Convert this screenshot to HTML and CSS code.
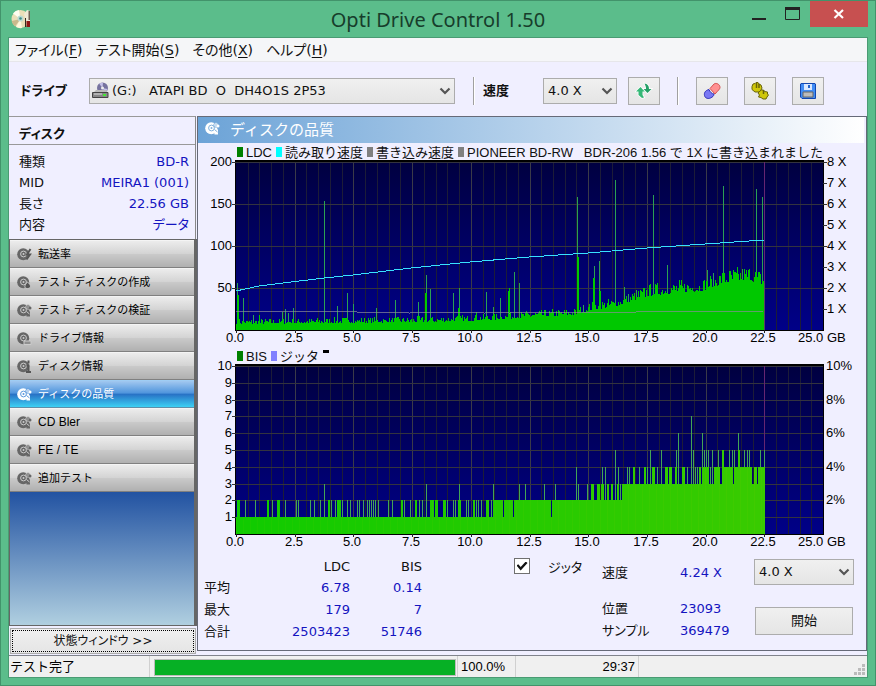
FILE: index.html
```html
<!DOCTYPE html>
<html lang="ja">
<head>
<meta charset="utf-8">
<title>Opti Drive Control 1.50</title>
<link rel="stylesheet" href="styles.css">
</head>
<body>
<svg class="defs" aria-hidden="true">
  <symbol id="chevron" viewBox="0 0 12 8"><path d="M1.500 1.500 6 6l4.500-4.500" fill="none" stroke="#555" stroke-width="2.200"/></symbol>
  <symbol id="disc" viewBox="0 0 15 14">
    <circle cx="6.200" cy="7.300" r="6" fill="currentColor"/>
    <circle cx="6.500" cy="7" r="2.900" fill="none" class="ring"/>
    <circle cx="6.500" cy="7" r="1" class="hole"/>
  </symbol>
  <symbol id="magnifier" viewBox="0 0 15 14">
    <path d="M9 10.500 13 8v5.500H9.500Z" fill="currentColor"/>
    <path d="M9.500 8.500 12.500 11" class="light"/>
    <circle cx="11" cy="4" r="2.200" fill="currentColor" class="ring"/><circle cx="13" cy="5" r="1.500" fill="currentColor"/>
    <circle cx="11" cy="4" r=".8" class="hole"/>
  </symbol>
</svg>
<div class="window">
  <header class="titlebar">
    <svg class="app-icon" viewBox="0 0 20 20">
      <circle cx="9.500" cy="10" r="9" fill="#eadfb8"/>
      <path d="M9.500 10 2 4.500A9 9 0 0 1 8 1Z" fill="#fffdf0"/><path d="M9.500 10 4 17.500A9 9 0 0 1 .7 12Z" fill="#c9b98c"/>
      <path d="M9.500 10 11 19A9 9 0 0 1 5 18Z" fill="#fff8dc"/>
      <path d="M13 5 16 1l3 1v10h-4Z" fill="#efe9d6"/><path d="M17.500 2H19v9h-1.500Z" fill="#6d6256"/>
      <circle cx="9.500" cy="9.500" r="3" fill="#bcd9d2"/><circle cx="9.500" cy="9.500" r="1.300" fill="#3c8f86"/>
      <path d="M14 9h1v9h-1Z" fill="#30291f"/><path d="M15.500 12H19v6h-3.500Z" fill="#8e1515"/>
    </svg>
    <h1>Opti Drive Control 1.50</h1>
    <div class="controls">
      <button aria-label="最小化"><svg width="14" height="14"><path d="M0 12h14" stroke="#222" stroke-width="2"/></svg></button>
      <button aria-label="最大化"><svg width="16" height="14"><path d="M.5 1V12.500H14.500V1" fill="none" stroke="#222"/><path d="M0 1.500H15" stroke="#222" stroke-width="3"/></svg></button>
      <button class="close" aria-label="閉じる"><svg width="12" height="10"><path d="M1.500 1 10 9M10 1 1.500 9" stroke="#fff" stroke-width="2.200"/></svg></button>
    </div>
  </header>
  <div class="client">
    <nav class="menu">
      <a href="#">ファイル(<u>F</u>)</a><a href="#">テスト開始(<u>S</u>)</a><a href="#">その他(<u>X</u>)</a><a href="#">ヘルプ(<u>H</u>)</a>
    </nav>
    <div class="toolbar">
      <label class="drive-label" for="drive">ドライブ</label>
      <div class="combo drive">
        <svg class="drive-icon" viewBox="0 0 17 17">
          <circle cx="10.500" cy="6" r="5.500" fill="#76739f"/><path d="M10.500 6 7 1.500 11 .5Z M10.500 6l5 1-2 3.500Z" fill="#c3bfe8"/><circle cx="10.500" cy="6" r="1.500" fill="#eee"/>
          <path d="M1 11 4 8h10l2 3Z" fill="#bbb"/><path d="M.5 10.500h15.500v5H.5Z" fill="#888" stroke="#444"/><path d="M2 12h8" stroke="#ddd"/><path d="M11 12h3v2h-3Z" fill="#42e832"/>
        </svg>
        <select id="drive"><option>(G:)&nbsp;&nbsp; ATAPI BD&nbsp; O&nbsp; DH4O1S 2P53</option></select>
        <svg class="chev"><use href="#chevron"/></svg>
      </div>
      <span class="sep"></span>
      <label class="speed-label" for="speed">速度</label>
      <div class="combo speed"><select id="speed"><option>4.0 X</option></select><svg class="chev"><use href="#chevron"/></svg></div>
      <button class="tool" aria-label="更新"><svg viewBox="0 0 18 18">
        <g stroke="#fff" stroke-width="1.500" paint-order="stroke">
        <path d="M1 9.500 5.500 5 10 9.500H7.500V13l1.500 2.500-2 .5-3.500-3V9.500Z" fill="#35b877"/>
        <path d="M9.500 1.500c3 .5 4.500 2 4.500 5.500h2.500L12.500 11 8.500 7H11c0-2-.5-3.500-1.500-5.500Z" fill="#249f66"/></g></svg></button>
      <span class="sep sep2"></span>
      <button class="tool" aria-label="消去"><svg viewBox="0 0 18 18">
        <path d="M7 6.500 11 2c2-1.500 6 0 6 3.500 0 1.500-2 3-5 6.500Z" fill="#ff9090" stroke="#d65050"/><path d="M6 7.500C2 8.500 1 11 1.500 13.500c.5 3 4 3.500 6 2.500 2-1 3.500-2 3.500-4C9 12 7 10 6 7.500Z" fill="#7a78f4" stroke="#3030b8"/></svg></button>
      <button class="tool" aria-label="設定"><svg viewBox="0 0 18 18">
        <g fill="#cfc70a" stroke="#69640a"><path d="M2 2 4 1.500 5 .5h2l1 1.500 2 1 1 3-1 2-2 2H4L1 7.500v-3Z"/><path d="M9 9 10.500 8h2l1 1.500 3 .5v2l1 1-1.500 2-1 2h-3l-2-1.500L7.500 15l1-2L7 11Z"/></g><path d="M5.500 1v5M8 2v4M12.500 8v4" stroke="#69640a" stroke-width="1.500"/></svg></button>
      <button class="tool" aria-label="保存"><svg viewBox="0 0 18 18">
        <path d="M2 1.500h14l.5.5v14.500H3L1.500 15V2Z" fill="#418df5" stroke="#1246b0"/><path d="M5 2h8v6H5Z" fill="#d9e8ff"/><path d="M9 3h2v3H9Z" fill="#2463c9"/><path d="M4 10h10v5H4Z" fill="#bbb" stroke="#666"/></svg></button>
    </div>
    <div class="main">
      <aside class="side">
        <section class="disc-info">
          <h2>ディスク</h2>
          <dl>
            <div><dt>種類</dt><dd>BD-R</dd></div>
            <div><dt>MID</dt><dd>MEIRA1 (001)</dd></div>
            <div><dt>長さ</dt><dd>22.56 GB</dd></div>
            <div><dt>内容</dt><dd>データ</dd></div>
          </dl>
        </section>
        <nav class="pages">
          <a href="#"><svg><use href="#disc"/><path d="M13.500 2 10 7.500h3L9.500 12.500" class="mark"/></svg>転送率</a>
          <a href="#"><svg><use href="#disc"/><path d="M10.500 7c4 3 4 6.500 0 6.500s-3-3.500 0-6.500Z" class="blob"/></svg>テスト ディスクの作成</a>
          <a href="#"><svg><use href="#disc"/><use href="#magnifier"/></svg>テスト ディスクの検証</a>
          <a href="#"><svg><use href="#disc"/><path d="M7 10h7v3.500H7Z" class="blob gray-blob"/></svg>ドライブ情報</a>
          <a href="#"><svg><use href="#disc"/><path d="M11.500 1.500v3M9.500 6.500h2v7M9 13h5" class="mark"/></svg>ディスク情報</a>
          <a href="#" class="active"><svg><use href="#disc"/><use href="#magnifier"/></svg>ディスクの品質</a>
          <a href="#" lang="en"><svg><use href="#disc"/><use href="#magnifier"/></svg>CD Bler</a>
          <a href="#" lang="en"><svg><use href="#disc"/><use href="#magnifier"/></svg>FE / TE</a>
          <a href="#"><svg><use href="#disc"/><use href="#magnifier"/></svg>追加テスト</a>
        </nav>
        <div class="state"><button>状態ウィンドウ &gt;&gt;</button></div>
      </aside>
      <main class="panel">
        <h2><svg><use href="#disc"/><use href="#magnifier"/></svg>ディスクの品質</h2>
        <figure>
          <figcaption><span class="green">LDC</span><span class="cyan">読み取り速度</span><span class="gray">書き込み速度</span><span class="gray">PIONEER BD-RW &nbsp; BDR-206 1.56 で 1X に書き込まれました</span></figcaption>
          <svg id="ldc" class="chart" viewBox="0 0 668 186"></svg>
        </figure>
        <figure>
          <figcaption><span class="green">BIS</span><span class="violet">ジッタ</span><i class="dash"></i></figcaption>
          <svg id="bis" class="chart" viewBox="0 0 668 186"></svg>
        </figure>
        <div class="results">
          <table>
            <thead><tr><td></td><th scope="col">LDC</th><th scope="col">BIS</th></tr></thead>
            <tbody>
              <tr><th scope="row">平均</th><td>6.78</td><td>0.14</td></tr>
              <tr><th scope="row">最大</th><td>179</td><td>7</td></tr>
              <tr><th scope="row">合計</th><td>2503423</td><td>51746</td></tr>
            </tbody>
          </table>
          <div class="jitter"><input type="checkbox" id="jitter" checked><label for="jitter">ジッタ</label></div>
          <dl>
            <div class="first"><dt>速度</dt><dd>4.24 X</dd></div>
            <div><dt>位置</dt><dd>23093</dd></div>
            <div><dt>サンプル</dt><dd>369479</dd></div>
          </dl>
          <div class="run">
            <div class="combo"><select aria-label="速度"><option>4.0 X</option></select><svg class="chev"><use href="#chevron"/></svg></div>
            <button>開始</button>
          </div>
        </div>
      </main>
    </div>
    <footer class="status">
      <span class="message">テスト完了</span>
      <span class="bar"><span class="fill"></span></span>
      <span class="percent">100.0%</span>
      <span class="time">29:37</span>
      <svg class="grip" viewBox="0 0 11 11"><path d="M8 0h3v3H8ZM4 4h3v3H4ZM8 4h3v3H8ZM0 8h3v3H0ZM4 8h3v3H4ZM8 8h3v3H8Z" fill="#bbb"/></svg>
    </footer>
  </div>
</div>
<script src="charts.js"></script>
</body>
</html>
```
FILE: styles.css
```css
* { box-sizing: border-box; }
body {
  margin: 0;
  font: 13px/20px "DejaVu Sans", "Noto Sans CJK JP", sans-serif;
  font-feature-settings: "palt";
  color: #111;
}
h1, h2, dl, dd, figure { margin: 0; font-weight: normal; }
a { color: inherit; text-decoration: none; }
button, select, input { font: inherit; color: inherit; margin: 0; }
.defs { position: absolute; width: 0; height: 0; }

.window {
  display: flex;
  flex-direction: column;
  min-height: 100vh;
  padding: 0 7px 7px;
  border: 1px solid #42936b;
  background: #5bbd8b;
}
.titlebar {
  display: grid;
  grid-template-columns: 1fr auto 1fr;
  height: 36px;
}
.app-icon { width: 20px; height: 20px; margin: 8px 0 0 3px; }
.titlebar h1 { font: 20px/38px "Noto Sans", sans-serif; color: #173d2b; }
.controls { display: flex; justify-content: flex-end; }
.controls button {
  display: flex;
  align-items: center;
  justify-content: center;
  width: 34px;
  height: 26px;
  padding: 0;
  border: 0;
  background: none;
}
.controls .close { width: 58px; background: #c75050; }

.client {
  display: flex;
  flex-direction: column;
  flex: 1;
  border: 1px solid #4a9b73;
  background: #f0efff;
}
.menu {
  display: flex;
  gap: 13px;
  height: 24px;
  padding-left: 6px;
  border-bottom: 1px solid #e6e6ea;
  background: #f5f6f8;
  font-size: 14px;
  line-height: 24px;
}
.menu u { text-underline-offset: 2px; }

.toolbar { display: flex; align-items: center; height: 54px; padding: 4px 43px 0 11px; }
.toolbar label { font-weight: bold; }
.drive-label { width: 69px; }
.combo { position: relative; }
.combo select {
  width: 100%;
  height: 26px;
  padding: 0 24px 0 4px;
  border: 1px solid #acacac;
  border-radius: 0;
  background: linear-gradient(#f0f0f0, #e5e5e5);
  appearance: none;
}
.combo .chev { position: absolute; top: 9px; right: 4px; width: 12px; height: 8px; pointer-events: none; }
.drive { flex: 1; }
.drive select { padding-left: 22px; }
.drive-icon { position: absolute; top: 4px; left: 3px; width: 17px; height: 17px; }
.sep { width: 2px; height: 28px; margin-left: 18px; border-left: 1px solid #a0a0a0; border-right: 1px solid #fff; }
.speed-label { width: 60px; margin-left: 8px; }
.speed { width: 74px; }
.tool {
  display: flex;
  align-items: center;
  justify-content: center;
  width: 32px;
  height: 28px;
  padding: 0;
  margin-left: 16px;
  border: 1px solid #acacac;
  background: linear-gradient(#f0f0f0, #e5e5e5);
}
.tool svg { width: 18px; height: 18px; }
.speed + .tool { margin-left: 11px; margin-right: -1px; }
.sep2 { margin-right: 1px; }

.main { display: grid; grid-template-columns: 188px 1fr; flex: 1; }
.side { display: flex; flex-direction: column; }
.disc-info { width: 187px; height: 123px; border-top: 1px solid #999; border-right: 1px solid #888; }
.disc-info h2 { height: 28px; padding-left: 10px; border-bottom: 1px solid #999; font-size: 13px; font-weight: bold; line-height: 34px; }
.disc-info dl { padding: 6px 6px 0 10px; }
.disc-info dl div { display: flex; justify-content: space-between; height: 21px; line-height: 21px; }
dd, tbody td { color: #1414c0; }

.pages {
  flex: 1;
  border: 1px solid #666;
  border-right-width: 3px;
  background: linear-gradient(#1c4c9c 45%, #2051a1 65%, #b0cfe0);
}
.pages a {
  display: flex;
  align-items: center;
  height: 28px;
  padding-left: 7px;
  border-bottom: 1px solid #808080;
  border-top: 1px solid #f4f4f4;
  background: linear-gradient(#ececec, #d4d4d4 48%, #cacaca 50%, #b0b0b0);
  color: #000;
  font: 11px/26px "Liberation Sans", "Noto Sans CJK JP", sans-serif;
}
.pages a:lang(en) { font-size: 12px; }
.pages svg, .panel h2 svg { width: 15px; height: 14px; margin-right: 6px; color: #666; overflow: visible; }
.pages svg { --light: #cacaca; }
.ring { stroke: var(--light); stroke-width: 1; }
.hole { fill: var(--light); }
.light { stroke: var(--light); }
.mark { fill: none; stroke: #555; stroke-width: 2; }
.blob { fill: #555; stroke: #ccc; }
.gray-blob { fill: #909090; }
.pages .active { border-top-color: #9fcdf4; border-bottom-color: #5f8fa8; background: linear-gradient(#a2c8f0, #4e94dc 47%, #2870c4 50%, #3cd0f4); color: #fff; }
.pages .active svg { --light: #5c9ade; color: #fff; }
.state { width: 187px; padding: 2px 0 1px 1px; }
.state button {
  display: block;
  width: 100%;
  height: 26px;
  padding: 0;
  border: 1px solid #acacac;
  outline: 1px dotted #000;
  outline-offset: -3px;
  background: linear-gradient(#f0f0f0, #e5e5e5);
  font-size: 12px;
}

.panel {
  display: flex;
  flex-direction: column;
  margin-bottom: 4px;
  border: 1px solid #666a78;
}
.panel h2 {
  display: flex;
  height: 26px;
  margin-right: 2px;
  padding-left: 7px;
  background: linear-gradient(90deg, #6ca3d7, #fff);
  color: #fff;
  font: 15px/26px "Liberation Sans", "Noto Sans CJK JP", sans-serif;
}
.panel h2 svg { --light: #7fb0dc; margin: 4px 10px 0 0; color: #fff; }
figcaption {
  display: flex;
  gap: 4px;
  height: 18px;
  padding-left: 39px;
  font: 13px/20px "Liberation Sans", "Noto Sans CJK JP", sans-serif;
  white-space: nowrap;
}
figcaption span::before { content: ""; display: inline-block; width: 6px; height: 10px; margin-right: 3px; background: var(--key); }
.green { --key: #008000; }
.cyan { --key: #00ffff; }
.gray { --key: #808080; }
.violet { --key: #8080ff; }
.dash { width: 6px; height: 3px; margin-top: 3px; background: #000; }
.chart { display: block; width: 100%; overflow: visible; font: 13px "Liberation Sans", sans-serif; }

.results { display: flex; padding: 5px 12px 0 6px; }
table { border-collapse: collapse; width: 218px; height: 87px; table-layout: fixed; }
td, th { height: 21px; padding: 0; font-weight: normal; text-align: right; }
tr > :first-child { width: 66px; text-align: left; }
tr > :last-child { width: 72px; }
.jitter { display: flex; gap: 18px; margin-left: 92px; width: 88px; height: 21px; padding-top: 2px; }
.jitter input {
  appearance: none;
  width: 16px;
  height: 16px;
  border: 1px solid #707070;
  background: #fff;
  display: grid;
  place-items: center;
}
.jitter input:checked::before { content: ""; width: 11px; height: 9px; background: #111; clip-path: polygon(0 45%, 16% 30%, 38% 60%, 84% 0, 100% 18%, 38% 100%); }
.results dl { width: 152px; padding-top: 7px; }
.results dl div { display: flex; height: 22px; }
.results dl .first { height: 36px; }
.results dt { width: 78px; }
.run { width: 100px; margin-left: auto; padding-top: 3px; }
.run button { display: block; width: 98px; height: 28px; margin: 22px 0 0 1px; padding: 0; border: 1px solid #acacac; background: linear-gradient(#f0f0f0, #e5e5e5); }

.status {
  display: flex;
  height: 22px;
  border-top: 1px solid #80838c;
  background: #f0f0f0;
  color: #000;
  font: 13px/22px "Liberation Sans", "Noto Sans CJK JP", sans-serif;
}
.status .message { width: 141px; padding-left: 1px; border-right: 1px solid #d0d0d0; }
.bar { width: 302px; height: 17px; margin: 3px 1px 0 4px; border: 1px solid #bcbcbc; }
.fill { display: block; height: 100%; background: #06b025; }
.percent { width: 59px; padding-left: 3px; border: solid #d0d0d0; border-width: 0 1px; }
.time { width: 123px; padding-right: 3px; border-right: 1px solid #d0d0d0; text-align: right; }
.grip { width: 11px; height: 11px; margin: 8px 2px 0 auto; }
```
FILE: charts.js
```js
const LEFT = 38, TOP = 0, WIDTH = 587, HEIGHT = 168, BOTTOM = 169;
const NS = "http://www.w3.org/2000/svg";

function add(svg, name, attrs, text) {
  const el = document.createElementNS(NS, name);
  for (const key in attrs) el.setAttribute(key, attrs[key]);
  if (text) el.textContent = text;
  svg.append(el);
}

function frame(svg, id, rows) {
  add(svg, "defs", {});
  svg.lastChild.innerHTML = `<linearGradient id="${id}" x2="0" y2="1"><stop stop-color="#000040"/><stop offset="1" stop-color="#000088"/></linearGradient>`;
  add(svg, "rect", { x: LEFT - 1, y: TOP - 1, width: WIDTH + 2, height: HEIGHT + 3, fill: "#000" });
  add(svg, "rect", { x: LEFT, y: TOP + 1, width: WIDTH, height: HEIGHT, fill: `url(#${id})` });
  for (let i = 1; i < 50; i++) {
    add(svg, "rect", { x: Math.round(LEFT + i * WIDTH / 50), y: 1, width: 1, height: HEIGHT, fill: i % 5 ? "#1c1c38" : "#3a3a48" });
  }
  for (let i = 0; i < rows; i++) {
    add(svg, "rect", { x: LEFT, y: Math.round(1 + i * HEIGHT / rows), width: WIDTH, height: 1, fill: "#33333f" });
  }
  for (let i = 0; i < 10; i++) {
    add(svg, "rect", { x: Math.round(LEFT + i * WIDTH / 10), y: BOTTOM, width: 1, height: 3, fill: "#222" });
    add(svg, "text", { x: Math.round(LEFT + i * WIDTH / 10) - 1, y: 181, "text-anchor": "middle" }, (i * 2.5).toFixed(1));
  }
  add(svg, "text", { x: 600, y: 181 }, "25.0 GB");
}

function bars(svg, heights, colour, thin) {
  heights.forEach((h, x) => {
    const side = Math.max(heights[x - 1] || 0, heights[x + 1] || 0);
    add(svg, "rect", { x: LEFT + x, y: BOTTOM - h, width: 1, height: h, fill: colour(x) });
    if (h > side + 6) add(svg, "rect", { x: LEFT + x, y: BOTTOM - h, width: 1, height: h - side, fill: thin });
  });
}

const ldc = document.getElementById("ldc");
ldc.setAttribute("shape-rendering", "crispEdges");
frame(ldc, "ldc-back", 4);

const base = [[0, 6], [100, 7], [200, 8], [255, 10], [300, 13], [340, 15], [351, 19], [382, 24], [412, 34], [439, 37], [466, 39], [486, 46], [513, 50], [528, 44]];
const peaks = { 1: 47, 2: 35, 7: 32, 17: 15, 23: 15, 46: 18, 49: 21, 52: 17, 57: 22, 88: 129, 101: 24, 111: 37, 117: 26, 140: 22, 159: 30, 182: 28, 189: 37, 190: 55, 194: 41, 217: 37, 222: 22, 223: 42, 240: 18, 250: 38, 257: 23, 264: 32, 272: 39, 273: 42, 278: 58, 283: 47, 341: 133, 342: 73, 357: 52, 358: 64, 363: 69, 364: 39, 379: 150, 388: 43, 417: 135, 431: 65, 471: 60, 487: 144, 520: 141, 526: 133 };
let seed = 7;
const noise = () => (seed = (seed * 16807) % 2147483647) / 2147483647;
const errors = [];
for (let x = 0, k = 0; x < 529; x++) {
  while (k < base.length - 2 && x >= base[k + 1][0]) k++;
  const [x0, y0] = base[k], [x1, y1] = base[k + 1];
  const level = y0 + (y1 - y0) * (x - x0) / (x1 - x0);
  const spread = 4 + level / 4;
  errors.push(peaks[x] || Math.round(level + noise() ** 2 * spread));
}
bars(ldc, errors, () => "#00c800", "#2ba052");
const write = [];
for (let x = 0; x < 528; x++) write.push(`${LEFT + x},${150 + (noise() > 0.9 ? 1 : 0) + (x > 120 && x < 400 ? 1 : 0)}`);
add(ldc, "polyline", { points: write.join(" "), fill: "none", stroke: "#8a8a9a", opacity: 0.7 });
add(ldc, "polyline", { points: "38,130 61,125 85,122 126,117 155,114 213,107 272,101 331,96 390,92 449,87 507,83 566,79", fill: "none", stroke: "#38e0ff" });
add(ldc, "rect", { x: 566, y: 1, width: 1, height: 168, fill: "#70207c", opacity: 0.8 });
for (let i = 1; i <= 4; i++) {
  add(ldc, "text", { x: 34, y: 173 - i * 42, "text-anchor": "end" }, String(i * 50));
  add(ldc, "rect", { x: 34, y: 169 - i * 42, width: 4, height: 1, fill: "#333" });
}
for (let i = 1; i <= 8; i++) {
  add(ldc, "rect", { x: 625, y: 169 - i * 21, width: 4, height: 1, fill: "#333" });
  add(ldc, "text", { x: 629, y: 173 - i * 21 }, i + " X");
}

const bis = document.getElementById("bis");
bis.setAttribute("shape-rendering", "crispEdges");
frame(bis, "bis-back", 10);
const counts = new Array(529).fill(1);
const spans = {
  2: "1-3 9 19 31-32 36 41-43 49 60 62 74 78 84 92-93 95 99 101-104 106 111 114 121 123 127 131 133 135 137 139 142 152 156 165-166 168 174 179-180 183 186 194-197 199-201 207-209 211 217 219 222-224 230 232 237-238 240 242 245 250-252 255 258-266 268-276 278-314 316-528",
  3: "88 190 223 257 283 289 308 319 342 351 355-357 361-363 365-367 371-372 375-376 381 384 386 387-528",
  4: "340 366 369 382 391 393 397-398 403 408-409 411 416-418 421 429-431 433-435 439-440 446-448 451 457 459 461 463-464 466-472 474 478-483 486-496 498-515 518-520 522-528",
  5: "379 414 425 440 457 468 470 472 476 482 486-487 493 496 498 503 508 511 513 524 528",
  6: "442 466 502",
  7: "455"
};
for (const value in spans) {
  for (const span of spans[value].split(" ")) {
    const [from, to = from] = span.split("-").map(Number);
    for (let x = from; x <= to; x++) counts[x] = Number(value);
  }
}
bars(bis, counts.map(n => Math.round(n * 16.8)), x => `rgb(${16 + Math.round(x / 13) + (x % 7 === 0 ? 8 : 0)},203,0)`, "#43a455");
add(bis, "rect", { x: 566, y: 1, width: 1, height: 84, fill: "#70207c", opacity: 0.8 });
for (let i = 1; i <= 10; i++) {
  const y = Math.round(169 - i * 16.8);
  add(bis, "text", { x: 34, y: y + 4, "text-anchor": "end" }, String(i));
  add(bis, "rect", { x: 34, y, width: 4, height: 1, fill: "#333" });
  if (i % 2 === 0) add(bis, "text", { x: 628, y: y + 4 }, i + "%");
}
```
